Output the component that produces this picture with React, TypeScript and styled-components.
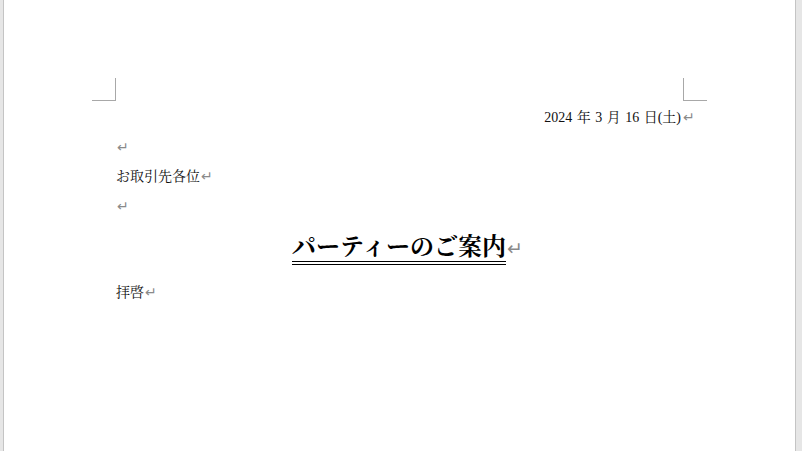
import styled, { createGlobalStyle } from "styled-components";

const GlobalStyle = createGlobalStyle`
  html, body {
    margin: 0;
    padding: 0;
    background: #e6e6e6;
    height: 100%;
    overflow: hidden;
  }
  #root {
    height: 100%;
  }
`;

const Workspace = styled.div`
  height: 100%;
  padding-left: 3px;
  display: flex;
`;

const Page = styled.div`
  width: 793px;
  height: 100%;
  background: #ffffff;
  border-left: 1px solid #c4c4c4;
  border-right: 1px solid #c4c4c4;
  padding-top: 78px;
  box-sizing: border-box;
  font-family: "Liberation Serif", "Noto Serif CJK JP", "Noto Sans CJK JP", serif;
  color: #111;
`;

const CropRow = styled.div`
  display: flex;
  justify-content: space-between;
  padding: 0 88px;
  height: 23px;
`;

const CropMark = styled.div<{ $side: "left" | "right" }>`
  width: 24px;
  height: 23px;
  box-sizing: border-box;
  border-bottom: 1px solid #a8a8a8;
  ${({ $side }) =>
    $side === "left"
      ? "border-right: 1px solid #a8a8a8;"
      : "border-left: 1px solid #a8a8a8;"}
`;

const Body = styled.div`
  padding: 2px 112px 0;
`;

const Para = styled.div<{ $align?: "left" | "right" | "center" }>`
  font-size: 14px;
  line-height: 29.5px;
  height: 29.5px;
  white-space: nowrap;
  text-align: ${({ $align }) => $align || "left"};
`;

const DateText = styled.span`
  word-spacing: 1px;
  margin-right: 2px;
`;

const Mark = styled.span`
  font-family: "DejaVu Sans", sans-serif;
  font-size: 14px;
  color: #8a8a8a;
  margin-left: 1px;
`;

const HangMark = styled.span`
  display: inline-block;
  width: 0;
  overflow: visible;
  white-space: nowrap;
  font-family: "DejaVu Sans", sans-serif;
  font-size: 14px;
  color: #8a8a8a;
`;

const TitleRow = styled.div`
  text-align: center;
  padding: 12px 0 13px;
  white-space: nowrap;
`;

const Title = styled.span`
  display: inline-block;
  font-size: 24px;
  font-weight: bold;
  line-height: 28px;
  border-bottom: 4px double #000;
  color: #000;
`;

const TitleMark = styled(HangMark)`
  font-size: 19px;
  margin-left: 1px;
`;

export default function App() {
  return (
    <>
      <GlobalStyle />
      <Workspace>
        <Page>
          <CropRow>
            <CropMark $side="left" />
            <CropMark $side="right" />
          </CropRow>
          <Body>
            <Para $align="right">
              <DateText>2024 年 3 月 16 日(土)</DateText>
              <HangMark>↵</HangMark>
            </Para>
            <Para>
              <Mark>↵</Mark>
            </Para>
            <Para>
              お取引先各位<Mark>↵</Mark>
            </Para>
            <Para>
              <Mark>↵</Mark>
            </Para>
            <TitleRow>
              <Title>パーティーのご案内</Title>
              <TitleMark>↵</TitleMark>
            </TitleRow>
            <Para>
              拝啓<Mark>↵</Mark>
            </Para>
          </Body>
        </Page>
      </Workspace>
    </>
  );
}
